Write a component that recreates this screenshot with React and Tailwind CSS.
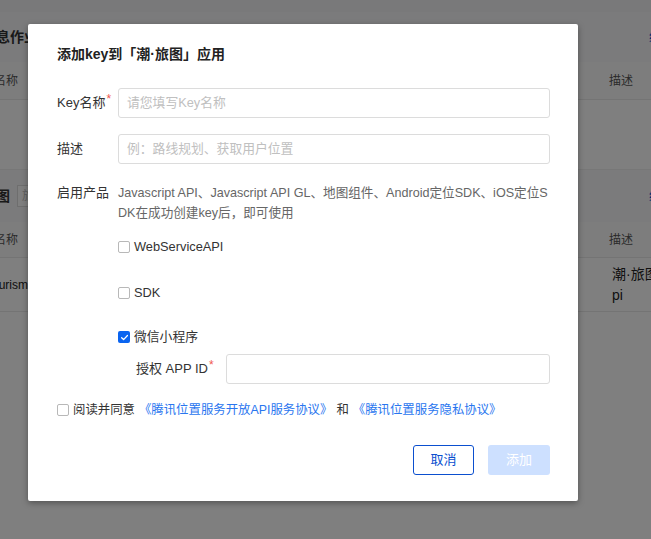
const font = { fontFamily: '"Liberation Sans", "Noto Sans CJK SC", sans-serif' };

function Box({ checked }) {
  if (checked) {
    return (
      <span className="flex h-[12px] w-[12px] shrink-0 items-center justify-center rounded-[2px] bg-[#0a64f0]">
        <svg width="9" height="9" viewBox="0 0 10 10" fill="none">
          <path d="M1.8 5.2 L4 7.3 L8.3 2.8" stroke="white" strokeWidth="1.4" strokeLinecap="round" strokeLinejoin="round" />
        </svg>
      </span>
    );
  }
  return <span className="h-[12px] w-[12px] shrink-0 rounded-[2px] border border-[#b8b8b8] bg-white" />;
}

function Star() {
  return <span className="relative -top-[4px] ml-[1px] text-[12px] text-[#f0584f]">*</span>;
}

function Backdrop() {
  return (
    <div className="h-[539px] w-full overflow-hidden bg-[#f2f3f5] pt-[12px] text-[#333]">
      <div className="bg-white">
        <div className="flex h-[50px] items-center justify-between bg-[#f6f7f9]">
          <span className="-ml-[4px] text-[14px] font-bold">息作业</span>
          <span className="mr-[-24px] text-[13px] text-[#0052d9]">编辑</span>
        </div>
        <div className="flex h-[38px] items-center justify-between border-b border-[#e8e8e8] bg-[#fbfbfb] text-[12px] text-[#555]">
          <span className="-ml-[6px]">名称</span>
          <span className="mr-[18px]">描述</span>
        </div>
        <div className="h-[70px] border-b border-[#eee] bg-white" />
      </div>
      <div className="bg-white">
        <div className="flex h-[52px] items-center justify-between bg-[#f6f7f9]">
          <div className="flex items-center gap-[7px]">
            <span className="-ml-[4px] text-[14px] font-bold">图</span>
            <span className="h-[22px] w-[30px] border border-[#ddd] bg-white pl-[4px] text-[12px] leading-[20px] text-[#bbb]">旅</span>
          </div>
          <span className="mr-[-24px] text-[13px] text-[#0052d9]">编辑</span>
        </div>
        <div className="flex h-[36px] items-center justify-between border-b border-[#e8e8e8] bg-[#fbfbfb] text-[12px] text-[#555]">
          <span className="-ml-[6px]">名称</span>
          <span className="mr-[18px]">描述</span>
        </div>
        <div className="flex h-[54px] items-center justify-between border-b border-[#e8e8e8] text-[14px] text-[#222]">
          <span className="-ml-[14px] text-[12px]">Tourism</span>
          <div className="mr-[-10px] w-[49px] leading-[21px]">
            <div className="whitespace-nowrap">潮·旅图</div>
            <div>pi</div>
          </div>
        </div>
        <div className="h-[240px] bg-white" />
      </div>
    </div>
  );
}

export default function App() {
  return (
    <div className="relative h-[539px] w-[651px] overflow-hidden" style={font}>
      <Backdrop />
      <div className="absolute inset-0 bg-black/50" />
      <div className="absolute left-[28px] top-[24px] h-[477px] w-[550px] rounded-[2px] bg-white pl-[29px] pr-[28px] pt-[20px] shadow-[0_2px_6px_rgba(0,0,0,0.35)]">
        <div className="h-[20px] text-[14px] font-bold leading-[20px] text-[#222]">添加key到「潮·旅图」应用</div>

        <div className="mt-[24px] flex items-center text-[13px] text-[#333]">
          <div className="w-[61px] shrink-0">Key名称<Star /></div>
          <div className="flex h-[30px] flex-1 items-center rounded-[3px] border border-[#dcdcdc] pl-[8px] text-[12.8px] text-[#c0c0c0]">请您填写Key名称</div>
        </div>

        <div className="mt-[16px] flex items-center text-[13px] text-[#333]">
          <div className="w-[61px] shrink-0">描述</div>
          <div className="flex h-[30px] flex-1 items-center rounded-[3px] border border-[#dcdcdc] pl-[8px] text-[12.8px] text-[#c0c0c0]">例：路线规划、获取用户位置</div>
        </div>

        <div className="mt-[19px] flex text-[13px] leading-[20px]">
          <div className="w-[61px] shrink-0 text-[#333]">启用产品</div>
          <div className="flex-1 text-[12.6px] text-[#666]">
            <div className="whitespace-nowrap">Javascript API、Javascript API GL、地图组件、Android定位SDK、iOS定位S</div>
            <div className="whitespace-nowrap">DK在成功创建key后，即可使用</div>
          </div>
        </div>

        <div className="ml-[61px] text-[12.8px] leading-[20px] text-[#333]">
          <label className="mt-[14px] flex items-center gap-[4px]">
            <Box />
            <span>WebServiceAPI</span>
          </label>
          <label className="mt-[26px] flex items-center gap-[4px]">
            <Box />
            <span>SDK</span>
          </label>
          <label className="mt-[24px] flex items-center gap-[4px]">
            <Box checked />
            <span>微信小程序</span>
          </label>
          <div className="mt-[7px] flex items-center text-[13px]">
            <div className="w-[108px] shrink-0 pl-[18px]">授权 APP ID<Star /></div>
            <div className="h-[30px] flex-1 rounded-[3px] border border-[#dcdcdc]" />
          </div>
        </div>

        <div className="mt-[16px] flex items-center text-[12.4px] leading-[20px] text-[#333]">
          <Box />
          <span className="ml-[4px]">阅读并同意</span>
          <span className="ml-[4px] text-[#2a76ef]">《腾讯位置服务开放API服务协议》</span>
          <span className="mx-[4px]">和</span>
          <span className="text-[#2a76ef]">《腾讯位置服务隐私协议》</span>
        </div>

        <div className="mt-[25px] flex justify-end gap-[14px] text-[13px]">
          <button className="h-[30px] w-[61px] rounded-[3px] border border-[#0b4fcf] bg-white text-[#0b4fcf]">取消</button>
          <button className="h-[30px] w-[62px] rounded-[3px] bg-[#cde0ff] text-white">添加</button>
        </div>
      </div>
    </div>
  );
}
